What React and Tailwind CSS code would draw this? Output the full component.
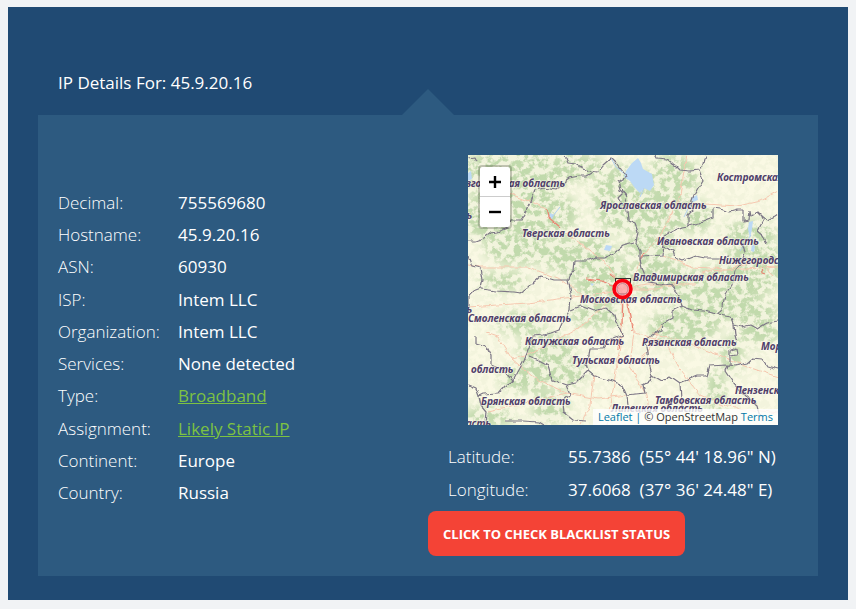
import React from "react";

const details = [
  { label: "Decimal:", value: "755569680" },
  { label: "Hostname:", value: "45.9.20.16" },
  { label: "ASN:", value: "60930" },
  { label: "ISP:", value: "Intem LLC" },
  { label: "Organization:", value: "Intem LLC" },
  { label: "Services:", value: "None detected" },
  { label: "Type:", value: "Broadband", href: "#broadband" },
  { label: "Assignment:", value: "Likely Static IP", href: "#static-ip" },
  { label: "Continent:", value: "Europe" },
  { label: "Country:", value: "Russia" },
];

const coordinates = [
  { label: "Latitude:", value: "55.7386\u00a0 (55° 44' 18.96\" N)" },
  { label: "Longitude:", value: "37.6068\u00a0 (37° 36' 24.48\" E)" },
];

const regions = [
  { name: "Новгородская область", x: 97, y: 32, anchor: "end" },
  { name: "ь", x: 4, y: 64, anchor: "end" },
  { name: "Костромская область", x: 249, y: 26 },
  { name: "Ярославская область", x: 132, y: 54 },
  { name: "Тверская область", x: 54, y: 82 },
  { name: "Ивановская область", x: 189, y: 90 },
  { name: "Нижегородская область", x: 251, y: 109 },
  { name: "Владимирская область", x: 165, y: 126 },
  { name: "Московская область", x: 112, y: 148 },
  { name: "ь", x: 4, y: 158, anchor: "end" },
  { name: "Смоленская область", x: 103, y: 167, anchor: "end" },
  { name: "Калужская область", x: 57, y: 190 },
  { name: "Рязанская область", x: 174, y: 191 },
  { name: "Мордовия", x: 293, y: 195 },
  { name: "Тульская область", x: 104, y: 209 },
  { name: "область", x: 3, y: 218 },
  { name: "Пензенская область", x: 267, y: 239 },
  { name: "Брянская область", x: 13, y: 250 },
  { name: "Тамбовская область", x: 187, y: 249 },
  { name: "Липецкая область", x: 143, y: 257 },
  { name: "область", x: 23, y: 272, anchor: "end" },
];

const borders = [
  "M97 1L100 8L108 9L115 13L123 17L129 18L135 10L143 3L148 8L156 18L158 22L150 27L152 35L155 38L150 43L153 48",
  "M123 18L118 21L111 21L101 23L97 26L88 35L76 33L66 35L64 41L61 50L56 60L53 65L43 65L40 73L30 77L23 78L16 83L8 86L0 86",
  "M154 35L159 41L155 50L159 55L160 65L167 68L170 76L168 88L172 95L172 105L174 113L177 120L177 127L192 130L202 128L210 138L214 151",
  "M187 0L189 4L200 5L207 10L212 15L222 16L231 15L235 8L237 0",
  "M231 15L235 25L230 33L226 40L223 48L224 56L220 60L220 71L232 68L245 63L245 53L252 54L262 57L269 55L275 55L275 66L281 65L282 56L283 62L289 56L294 61L299 65L307 61L310 59",
  "M294 61L295 65L289 76L295 81L299 88",
  "M220 71L214 72L205 76L197 80L195 88L194 100L184 101L175 102L172 105",
  "M195 92L205 96L207 103L214 106L227 101L237 103L252 103L262 102",
  "M274 88L277 98L273 108L267 116L264 131L257 140L255 151L250 159",
  "M214 151L224 155L235 156L250 159L262 161L266 170L267 180L269 188",
  "M266 170L274 172L282 170L289 174L299 168L310 166",
  "M214 151L204 156L204 163L195 168L194 175L184 179L180 184L177 186",
  "M1 100L5 111L13 113L15 125L13 133L5 136L1 140L1 158",
  "M13 134L28 136L46 137L53 138L60 133L66 127L73 121L86 125L100 125L101 120L106 115L107 106L121 106L128 103L138 103L145 98L155 90L166 87",
  "M100 125L103 138L102 155L95 166L91 175L83 178L76 180L65 181L61 193L56 206L51 215L45 226L36 231L30 238L15 239L11 241L8 233L1 230",
  "M103 155L113 151L125 156L138 153L146 160L148 168L153 173L155 180L140 186L135 193L122 193L121 201L118 208L120 216",
  "M8 181L8 188L18 191L23 201L23 210L35 215L45 226",
  "M61 202L71 206L80 211L84 225L98 230L108 228L120 216L126 221L145 226L155 231L159 240L160 250",
  "M98 230L102 240L95 246L96 258L105 265L118 266",
  "M11 241L13 250L18 256L17 270",
  "M36 266L55 266L71 267L76 270",
  "M177 186L179 198L180 206L184 220L182 226L175 230L177 238L159 240",
  "M184 220L194 226L202 221L212 228L229 221L239 221L242 211L259 210L267 211L280 208L285 204L295 205L299 211L310 214",
  "M212 228L213 245L215 256",
  "M259 210L257 216L265 228L277 241L289 251L292 262",
  "M262 210L262 195L268 193L269 200L262 201",
  "M0 3L6 2L8 6",
];

const roads = [
  "M28 30L45 40L66 48L78 54",
  "M95 77L112 88L140 110L154 134",
  "M154 134L168 118L175 100L192 80L203 60L212 40L219 0",
  "M0 110L12 112L60 112L94 125L128 150L154 134",
  "M0 152L60 148L120 140L154 134L180 130L228 130",
  "M154 134L190 134L240 116L310 112",
  "M154 134L135 152L115 170L90 184L60 200L44 204",
  "M154 134L154 180L148 215L140 270",
  "M154 134L166 176L162 210L178 240L182 270",
  "M44 204L30 182L18 178M44 204L65 222L98 238L130 244L158 240",
  "M98 238L66 246L20 256",
  "M166 176L200 190L212 215L232 240L260 252L310 258",
  "M185 178L215 186L280 212L310 222",
  "M220 48L270 51L292 46L310 36",
  "M194 100L225 112L260 114L290 106L305 120",
  "M126 220L122 250L112 270",
  "M194 168L180 196L165 208",
];

const forests = [
  [45, 20, 55, 26],
  [28, 62, 38, 24],
  [80, 58, 30, 22],
  [105, 12, 30, 14],
  [152, 44, 28, 34],
  [205, 22, 26, 22],
  [192, 58, 32, 22],
  [228, 62, 16, 16],
  [182, 92, 26, 14],
  [110, 100, 40, 20],
  [50, 92, 34, 18],
  [35, 126, 24, 10],
  [135, 124, 30, 26],
  [190, 122, 30, 20],
  [244, 140, 42, 28],
  [285, 112, 30, 30],
  [282, 78, 28, 12],
  [215, 172, 36, 18],
  [284, 156, 26, 12],
  [128, 162, 26, 12],
  [78, 196, 28, 18],
  [98, 218, 20, 14],
  [58, 224, 26, 14],
  [82, 252, 18, 16],
  [264, 200, 12, 18],
  [248, 238, 10, 24],
  [20, 262, 26, 10],
  [52, 168, 24, 12],
  [292, 176, 22, 14],
];

const lakes = [
  "M158 16L164 8L170 3L173 8L175 14L184 19L186 30L182 36L176 33L172 38L167 33L162 26L156 22Z",
  "M223 43L229 40L230 45L225 47Z",
  "M281 67L285 66L284 74L282 83L280 74Z",
  "M82 58L86 60L84 64L81 62Z",
  "M0 18L3 16L4 24L0 26Z",
  "M138 90L144 91L142 96L136 95Z",
  "M284 89L287 91L286 97L283 96Z",
  "M122 128L126 129L124 131Z",
];

const DetailRow = ({ label, value, href }) => (
  <div className="flex text-[17px] leading-8">
    <dt className="w-[120px] shrink-0 font-light">{label}</dt>
    <dd className="font-medium">
      {href ? (
        <a href={href} className="font-normal text-[#7dc242] underline">
          {value}
        </a>
      ) : (
        value
      )}
    </dd>
  </div>
);

const MapTiles = () => (
  <svg
    className="block h-full w-full"
    viewBox="0 0 310 270"
    preserveAspectRatio="xMidYMid slice"
    role="img"
    aria-label="Map of the region around Moscow"
  >
    <defs>
      <filter id="grain" x="0" y="0" width="100%" height="100%" colorInterpolationFilters="sRGB">
        <feTurbulence type="fractalNoise" baseFrequency="0.15" numOctaves="5" seed="8" />
        <feColorMatrix values="0 0 0 0 0.72  0 0 0 0 0.83  0 0 0 0 0.64  6 0 0 0 -2.5" />
      </filter>
      <filter id="soft">
        <feGaussianBlur stdDeviation="5" />
      </filter>
      <filter
        id="rough"
        filterUnits="userSpaceOnUse"
        x="0"
        y="0"
        width="310"
        height="270"
        colorInterpolationFilters="sRGB"
      >
        <feTurbulence type="fractalNoise" baseFrequency="0.12" numOctaves="2" seed="3" />
        <feDisplacementMap in="SourceGraphic" scale="5" xChannelSelector="R" yChannelSelector="G" />
      </filter>
      <mask id="woods" maskUnits="userSpaceOnUse" x="0" y="0" width="310" height="270">
        <rect width="310" height="270" fill="#222" />
        <g filter="url(#soft)" fill="#ddd">
          {forests.map(([cx, cy, rx, ry]) => (
            <ellipse key={`${cx}-${cy}`} cx={cx} cy={cy} rx={rx} ry={ry} />
          ))}
        </g>
      </mask>
    </defs>

    <rect width="310" height="270" fill="#fcfae6" />
    <g mask="url(#woods)">
      <rect width="310" height="270" fill="#e3ecd0" opacity="0.5" />
      <rect width="310" height="270" filter="url(#grain)" />
    </g>

    {lakes.map((d) => (
      <path key={d} d={d} fill="#bcd9f5" />
    ))}
    <path d="M143 3L148 12L158 20M176 33L172 42M225 46L221 52L216 62M283 80L272 96M92 52L84 62" fill="none" stroke="#b3d0ee" strokeWidth="1" />

    <g filter="url(#rough)" fill="none" strokeLinejoin="round">
      <g stroke="#f6c8b0" strokeWidth="1">
        {roads.map((d) => (
          <path key={d} d={d} />
        ))}
      </g>
      <path
        d="M78 54L80 62L92 72M118 124L134 126L145 131L152 133M142 118L148 124M155 142L154 170M158 142L162 160L164 176M172 104L176 98M152 182L150 194M294 112L295 119L298 120"
        stroke="#ea8573"
        strokeWidth="1.2"
      />
      <g stroke="#7d7786" strokeWidth="1.2">
        {borders.map((d) => (
          <path key={d} d={d} />
        ))}
      </g>
    </g>

    <g
      className="font-['Noto_Sans',sans-serif] text-[10px] font-bold italic"
      fill="#50406a"
      stroke="#fffdf0"
      strokeOpacity="0.6"
      strokeWidth="1.5"
      paintOrder="stroke"
    >
      {regions.map((r) => (
        <text key={`${r.name}-${r.x}-${r.y}`} x={r.x} y={r.y} textAnchor={r.anchor || "start"}>
          {r.name}
        </text>
      ))}
    </g>

    <rect x="147.5" y="123.5" width="15" height="15" fill="none" stroke="#333" />
    <circle cx="154.5" cy="134" r="8.5" fill="#ffa0a8" fillOpacity="0.8" stroke="#f8000f" strokeWidth="3.5" />
    <circle cx="154.5" cy="134" r="5.5" fill="none" stroke="#c98a94" strokeWidth="1" />
  </svg>
);

const LocationMap = () => (
  <div className="relative mx-10 h-[270px] overflow-hidden font-['Open_Sans',sans-serif]">
    <MapTiles />
    <div className="absolute left-[10px] top-[10px] flex w-[34px] flex-col rounded-[4px] border-2 border-black/20 bg-white bg-clip-padding text-black">
      <button type="button" aria-label="Zoom in" className="flex h-[30px] items-center justify-center border-b border-[#ccc]">
        <svg className="h-3 w-3" viewBox="0 0 12 12">
          <path d="M0 6H12M6 0V12" stroke="currentColor" strokeWidth="2.4" />
        </svg>
      </button>
      <button type="button" aria-label="Zoom out" className="flex h-[30px] items-center justify-center">
        <svg className="h-3 w-3" viewBox="0 0 12 12">
          <path d="M0 6H12" stroke="currentColor" strokeWidth="2.4" />
        </svg>
      </button>
    </div>
    <div className="absolute bottom-0 right-0 bg-white/80 px-[5px] text-[11px] leading-4 text-[#333]">
      <a href="#leaflet" className="text-[#0078a8]">Leaflet</a>
      <span className="text-[#0078a8]"> | </span>© OpenStreetMap{" "}
      <a href="#terms" className="text-[#0078a8]">Terms</a>
    </div>
  </div>
);

const App = () => {
  return (
    <div className="min-h-screen bg-[#f1f3f5] px-2 pb-2 pt-[7px] font-['Open_Sans',sans-serif] text-white">
      <main className="bg-[#204a73] px-[30px] pb-6 pt-16">
        <h1 className="px-5 text-[17px] leading-6">IP Details For: 45.9.20.16</h1>

        <section className="relative mt-5 grid grid-cols-2 bg-[#2d5a80] pb-5 pt-10">
          <svg className="absolute bottom-full left-1/2 h-[26px] w-[52px] -translate-x-1/2" viewBox="0 0 52 26">
            <path d="M0 26L26 0L52 26Z" fill="#2d5a80" />
          </svg>

          <dl className="flex flex-col justify-between pb-[47px] pl-5 pt-8">
            {details.map((row) => (
              <DetailRow key={row.label} {...row} />
            ))}
          </dl>

          <div>
            <LocationMap />
            <dl className="mt-4 flex flex-col gap-px pl-5">
              {coordinates.map((row) => (
                <DetailRow key={row.label} {...row} />
              ))}
            </dl>
            <button
              type="button"
              className="mt-[5px] h-[45px] rounded-lg bg-[#f44336] px-[15px] pt-0.5 text-[13px] font-bold text-white"
            >
              CLICK TO CHECK BLACKLIST STATUS
            </button>
          </div>
        </section>
      </main>
    </div>
  );
};

export default App;
